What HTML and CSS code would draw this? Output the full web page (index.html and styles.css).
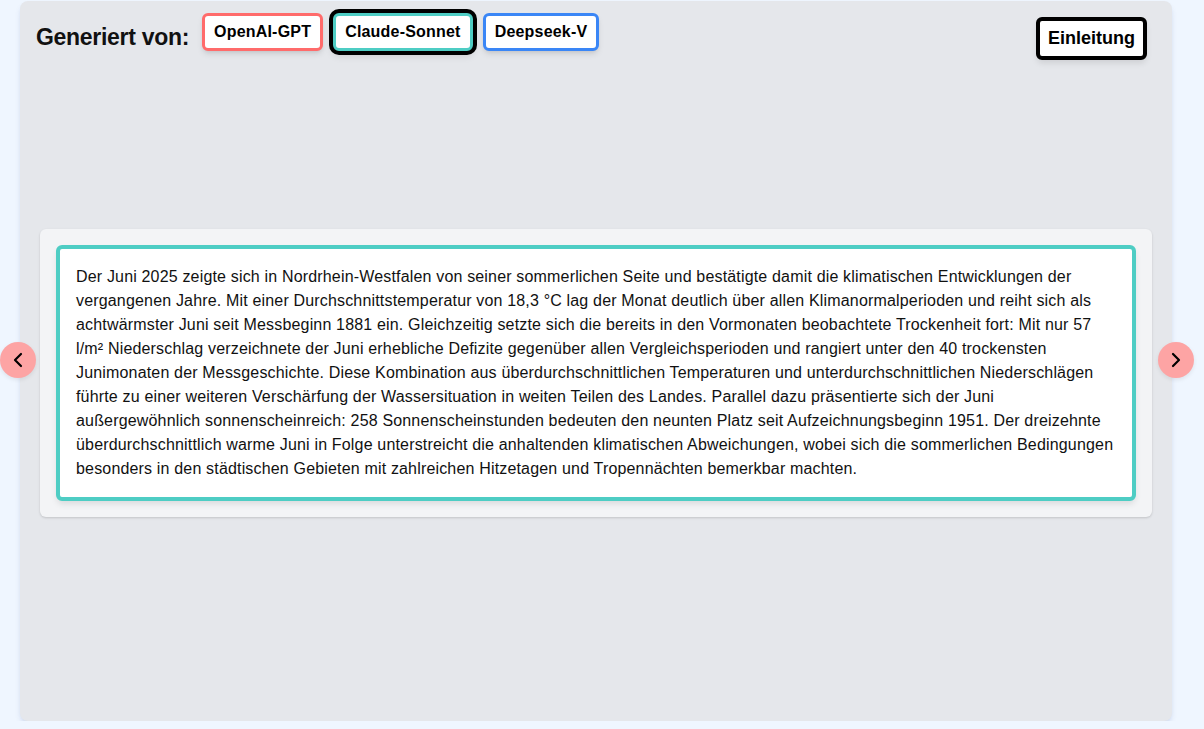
FILE: index.html
```html
<!DOCTYPE html>
<html lang="de">
<head>
<meta charset="utf-8">
<title>Generiert von</title>
<link rel="stylesheet" href="styles.css">
</head>
<body>
<div class="panel">
  <div class="header">
    <div class="left">
      <span class="label">Generiert von:</span>
      <button class="model red">OpenAI-GPT</button>
      <button class="model teal active">Claude-Sonnet</button>
      <button class="model blue">Deepseek-V</button>
    </div>
    <button class="section">Einleitung</button>
  </div>
  <div class="card">
    <div class="textbox">Der Juni 2025 zeigte sich in Nordrhein-Westfalen von seiner sommerlichen Seite und bestätigte damit die klimatischen Entwicklungen der vergangenen Jahre. Mit einer Durchschnittstemperatur von 18,3 °C lag der Monat deutlich über allen Klimanormalperioden und reiht sich als achtwärmster Juni seit Messbeginn 1881 ein. Gleichzeitig setzte sich die bereits in den Vormonaten beobachtete Trockenheit fort: Mit nur 57 l/m² Niederschlag verzeichnete der Juni erhebliche Defizite gegenüber allen Vergleichsperioden und rangiert unter den 40 trockensten Junimonaten der Messgeschichte. Diese Kombination aus überdurchschnittlichen Temperaturen und unterdurchschnittlichen Niederschlägen führte zu einer weiteren Verschärfung der Wassersituation in weiten Teilen des Landes. Parallel dazu präsentierte sich der Juni außergewöhnlich sonnenscheinreich: 258 Sonnenscheinstunden bedeuten den neunten Platz seit Aufzeichnungsbeginn 1951. Der dreizehnte überdurchschnittlich warme Juni in Folge unterstreicht die anhaltenden klimatischen Abweichungen, wobei sich die sommerlichen Bedingungen besonders in den städtischen Gebieten mit zahlreichen Hitzetagen und Tropennächten bemerkbar machten.</div>
  </div>
  <button class="arrow prev" aria-label="Zurück"><svg viewBox="0 0 24 24" width="24" height="24"><path d="M15 6l-6 6 6 6" fill="none" stroke="#000" stroke-width="2.2" stroke-linecap="round" stroke-linejoin="round"/></svg></button>
  <button class="arrow next" aria-label="Weiter"><svg viewBox="0 0 24 24" width="24" height="24"><path d="M9 6l6 6-6 6" fill="none" stroke="#000" stroke-width="2.2" stroke-linecap="round" stroke-linejoin="round"/></svg></button>
</div>
</body>
</html>
```
FILE: styles.css
```css
html, body {
  margin: 0;
  padding: 0;
  background: #eff6ff;
}
body {
  padding: 1px 0 0 20px;
  font-family: "Liberation Sans", Arial, sans-serif;
  color: #000;
}
.panel {
  position: relative;
  box-sizing: border-box;
  width: 1152px;
  height: 720px;
  background: #e5e7eb;
  border-radius: 8px;
  box-shadow: 0 4px 6px -1px rgba(30, 58, 138, 0.12), 0 2px 4px -2px rgba(30, 58, 138, 0.1);
  padding: 12px 20px 20px 20px;
}
.header {
  display: flex;
  justify-content: space-between;
  align-items: flex-start;
  margin: 0 5px 0 -4px;
}
.left {
  display: flex;
  align-items: center;
  gap: 10px;
}
.label {
  font-size: 23px;
  font-weight: 700;
  letter-spacing: -0.3px;
  color: #111;
  margin-top: 10px;
  margin-right: 3px;
}
.model {
  font-family: "Liberation Sans", Arial, sans-serif;
  font-size: 16px;
  font-weight: 700;
  line-height: 20px;
  letter-spacing: 0.2px;
  padding: 6px 9px;
  background: #fff;
  color: #000;
  border: 3px solid;
  border-radius: 6px;
  box-shadow: 0 4px 6px -1px rgba(0, 0, 0, 0.1), 0 2px 4px -2px rgba(0, 0, 0, 0.1);
  cursor: pointer;
}
.model.red { border-color: #ff6b6b; }
.model.teal { border-color: #4ecdc4; }
.model.blue { border-color: #3a86f6; }
.model.active {
  box-shadow: 0 0 0 4px #000, 0 4px 8px rgba(0, 0, 0, 0.15);
}
.section {
  margin-top: 4px;
  font-family: "Liberation Sans", Arial, sans-serif;
  font-size: 18px;
  font-weight: 700;
  line-height: 23px;
  padding: 6px 8px;
  background: #fff;
  color: #000;
  border: 4px solid #000;
  border-radius: 6px;
  box-shadow: 0 4px 6px -1px rgba(0, 0, 0, 0.1);
}
.card {
  margin-top: 169px;
  background: #f3f4f6;
  border-radius: 6px;
  padding: 16px;
  box-shadow: 0 1px 3px rgba(0, 0, 0, 0.1), 0 1px 2px rgba(0, 0, 0, 0.06);
}
.textbox {
  background: #fff;
  border: 4px solid #4ecdc4;
  border-radius: 6px;
  padding: 16px;
  font-size: 16px;
  line-height: 24px;
  letter-spacing: 0.17px;
  color: #111;
  box-shadow: 0 4px 6px -1px rgba(0, 0, 0, 0.1);
}
.arrow {
  position: absolute;
  top: 341px;
  width: 36px;
  height: 36px;
  border: 0;
  border-radius: 50%;
  background: #fda4a4;
  padding: 0;
  display: flex;
  align-items: center;
  justify-content: center;
  box-shadow: 0 2px 4px rgba(0, 0, 0, 0.08);
}
.arrow.prev { left: -20px; }
.arrow.next { right: -22px; }
```
